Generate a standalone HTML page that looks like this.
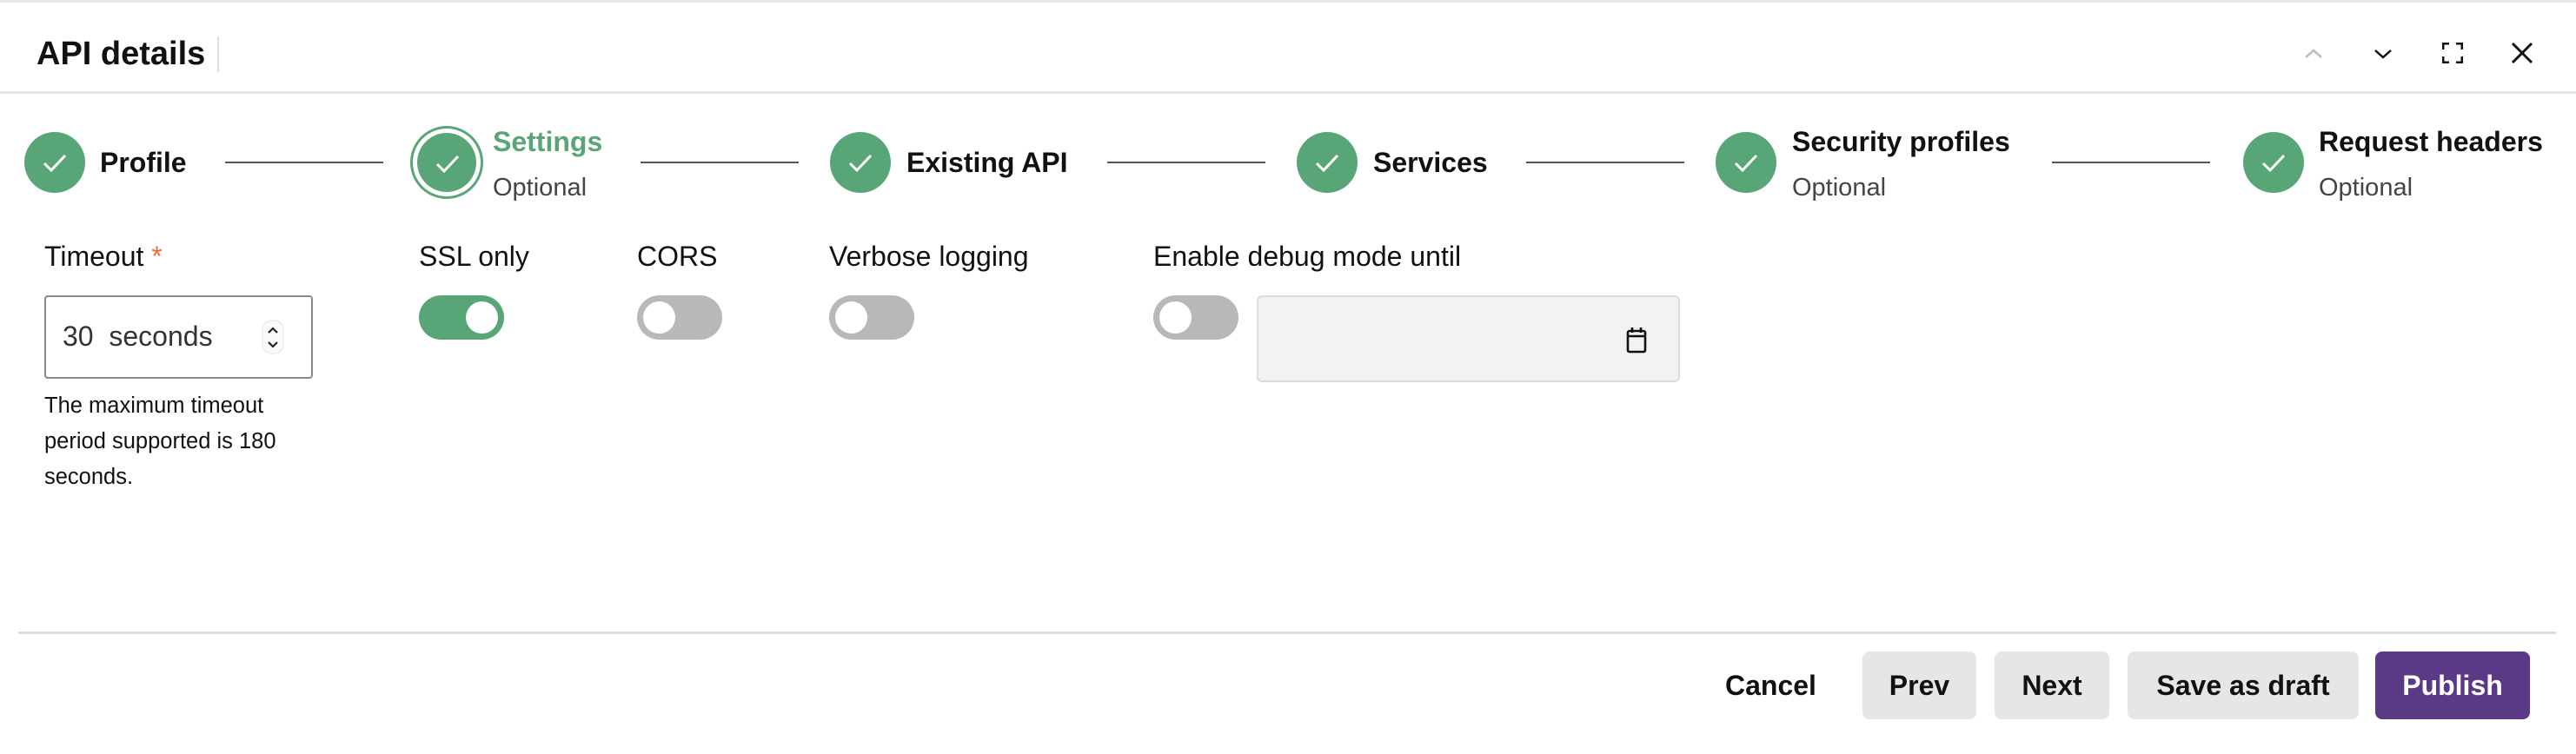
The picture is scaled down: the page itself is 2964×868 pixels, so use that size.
<!DOCTYPE html>
<html><head><meta charset="utf-8"><style>
*{box-sizing:border-box;margin:0;padding:0}
body{width:2964px;height:868px;background:#fff;font-family:"Liberation Sans",sans-serif;color:#111;position:relative;overflow:hidden}
.a{position:absolute;white-space:nowrap}
.top{left:0;top:0;width:2964px;height:3px;background:#e8e8e8}
.hb{left:0;top:105px;width:2964px;height:3px;background:#e3e3e3}
.title{left:42px;top:40px;font-size:38px;font-weight:bold;line-height:44px}
.vbar{left:250px;top:42px;width:2px;height:41px;background:#ddd}
.c{width:70px;height:70px;border-radius:50%;background:#58a677;top:152px}
.c svg{position:absolute;left:20px;top:22px}
.ring{width:84px;height:84px;border-radius:50%;border:3px solid #58a677;top:145px;background:#fff}
.ring .c{left:5px;top:5px;width:68px;height:68px}
.ln{top:186px;height:2px;background:#555}
.lb{font-size:32px;font-weight:bold;line-height:38px}
.op{font-size:29px;color:#444;line-height:34px}
.fl{font-size:32px;line-height:38px;top:276px}
.tg{top:340px;width:98px;height:51px;border-radius:26px;background:#b7b8ba}
.tg::after{content:"";position:absolute;top:7px;left:7px;width:37px;height:37px;border-radius:50%;background:#fff}
.tg.on{background:#58a677}
.tg.on::after{left:54px}
.btn{top:750px;height:78px;border-radius:8px;background:#e6e6e6;font-size:32px;font-weight:bold;line-height:78px;text-align:center}
</style></head><body>
<div class="a top"></div>
<div class="a title">API details</div>
<div class="a vbar"></div>
<svg class="a" style="left:2650px;top:50px" width="24" height="24" viewBox="0 0 24 24"><path d="M3 16l9-8 9 8" fill="none" stroke="#bbb" stroke-width="2.5"/></svg>
<svg class="a" style="left:2730px;top:50px" width="24" height="24" viewBox="0 0 24 24"><path d="M3 8l9 8 9-8" fill="none" stroke="#111" stroke-width="2.5"/></svg>
<svg class="a" style="left:2810px;top:49px" width="24" height="24" viewBox="0 0 24 24"><path d="M1 8V1h7M16 1h7v7M23 16v7h-7M8 23H1v-7" fill="none" stroke="#111" stroke-width="3"/></svg>
<svg class="a" style="left:2889px;top:48px" width="26" height="26" viewBox="0 0 26 26"><path d="M2 2l22 22M24 2L2 24" fill="none" stroke="#111" stroke-width="3"/></svg>
<div class="a hb"></div>

<!-- steps -->
<div class="a c" style="left:28px"><svg width="30" height="26" viewBox="0 0 30 26"><path d="M3 14l8 8L27 5" fill="none" stroke="#fff" stroke-width="3"/></svg></div>
<div class="a lb" style="left:115px;top:168px">Profile</div>
<div class="a ln" style="left:259px;width:182px"></div>
<div class="a ring" style="left:472px"><div class="a c"><svg width="30" height="26" viewBox="0 0 30 26"><path d="M3 14l8 8L27 5" fill="none" stroke="#fff" stroke-width="3"/></svg></div></div>
<div class="a lb" style="left:567px;top:144px;color:#58a677">Settings</div>
<div class="a op" style="left:567px;top:199px">Optional</div>
<div class="a ln" style="left:737px;width:182px"></div>
<div class="a c" style="left:955px"><svg width="30" height="26" viewBox="0 0 30 26"><path d="M3 14l8 8L27 5" fill="none" stroke="#fff" stroke-width="3"/></svg></div>
<div class="a lb" style="left:1043px;top:168px">Existing API</div>
<div class="a ln" style="left:1274px;width:182px"></div>
<div class="a c" style="left:1492px"><svg width="30" height="26" viewBox="0 0 30 26"><path d="M3 14l8 8L27 5" fill="none" stroke="#fff" stroke-width="3"/></svg></div>
<div class="a lb" style="left:1580px;top:168px">Services</div>
<div class="a ln" style="left:1756px;width:182px"></div>
<div class="a c" style="left:1974px"><svg width="30" height="26" viewBox="0 0 30 26"><path d="M3 14l8 8L27 5" fill="none" stroke="#fff" stroke-width="3"/></svg></div>
<div class="a lb" style="left:2062px;top:144px">Security profiles</div>
<div class="a op" style="left:2062px;top:199px">Optional</div>
<div class="a ln" style="left:2361px;width:182px"></div>
<div class="a c" style="left:2581px"><svg width="30" height="26" viewBox="0 0 30 26"><path d="M3 14l8 8L27 5" fill="none" stroke="#fff" stroke-width="3"/></svg></div>
<div class="a lb" style="left:2668px;top:144px">Request headers</div>
<div class="a op" style="left:2668px;top:199px">Optional</div>

<!-- form -->
<div class="a fl" style="left:51px">Timeout <span style="color:#ee6a2f">*</span></div>
<div class="a" style="left:51px;top:340px;width:309px;height:96px;border:2px solid #8a8a8a;border-radius:4px"></div>
<div class="a" style="left:72px;top:368px;font-size:32px;line-height:38px;color:#333">30&nbsp;&nbsp;seconds</div>
<svg class="a" style="left:300px;top:367px" width="28" height="42" viewBox="0 0 28 42"><rect x="2" y="2" width="24" height="38" rx="10" fill="#fafafa" stroke="#e4e4e4"/><path d="M9 16l5-5 5 5M9 27l5 5 5-5" fill="none" stroke="#222" stroke-width="2.2"/></svg>
<div class="a" style="left:51px;top:447px;font-size:25.5px;line-height:41px;white-space:normal;width:320px">The maximum timeout period supported is 180 seconds.</div>

<div class="a fl" style="left:482px">SSL only</div>
<div class="a tg on" style="left:482px"></div>
<div class="a fl" style="left:733px">CORS</div>
<div class="a tg" style="left:733px"></div>
<div class="a fl" style="left:954px">Verbose logging</div>
<div class="a tg" style="left:954px"></div>
<div class="a fl" style="left:1327px">Enable debug mode until</div>
<div class="a tg" style="left:1327px"></div>
<div class="a" style="left:1446px;top:340px;width:487px;height:100px;background:#f2f2f2;border:2px solid #dcdcdc;border-radius:6px"></div>
<svg class="a" style="left:1870px;top:374px" width="26" height="34" viewBox="0 0 26 34"><rect x="3" y="7" width="20" height="24" rx="2" fill="none" stroke="#111" stroke-width="2.6"/><path d="M3 13h20M8 3v6M18 3v6" stroke="#111" stroke-width="2.6"/></svg>

<!-- footer -->
<div class="a" style="left:21px;top:727px;width:2920px;height:3px;background:#dcdcdc"></div>
<div class="a" style="left:1985px;top:750px;font-size:32px;font-weight:bold;line-height:78px">Cancel</div>
<div class="a btn" style="left:2143px;width:131px">Prev</div>
<div class="a btn" style="left:2295px;width:132px">Next</div>
<div class="a btn" style="left:2448px;width:266px">Save as draft</div>
<div class="a btn" style="left:2733px;width:178px;background:#5a3a87;color:#fff">Publish</div>
</body></html>
